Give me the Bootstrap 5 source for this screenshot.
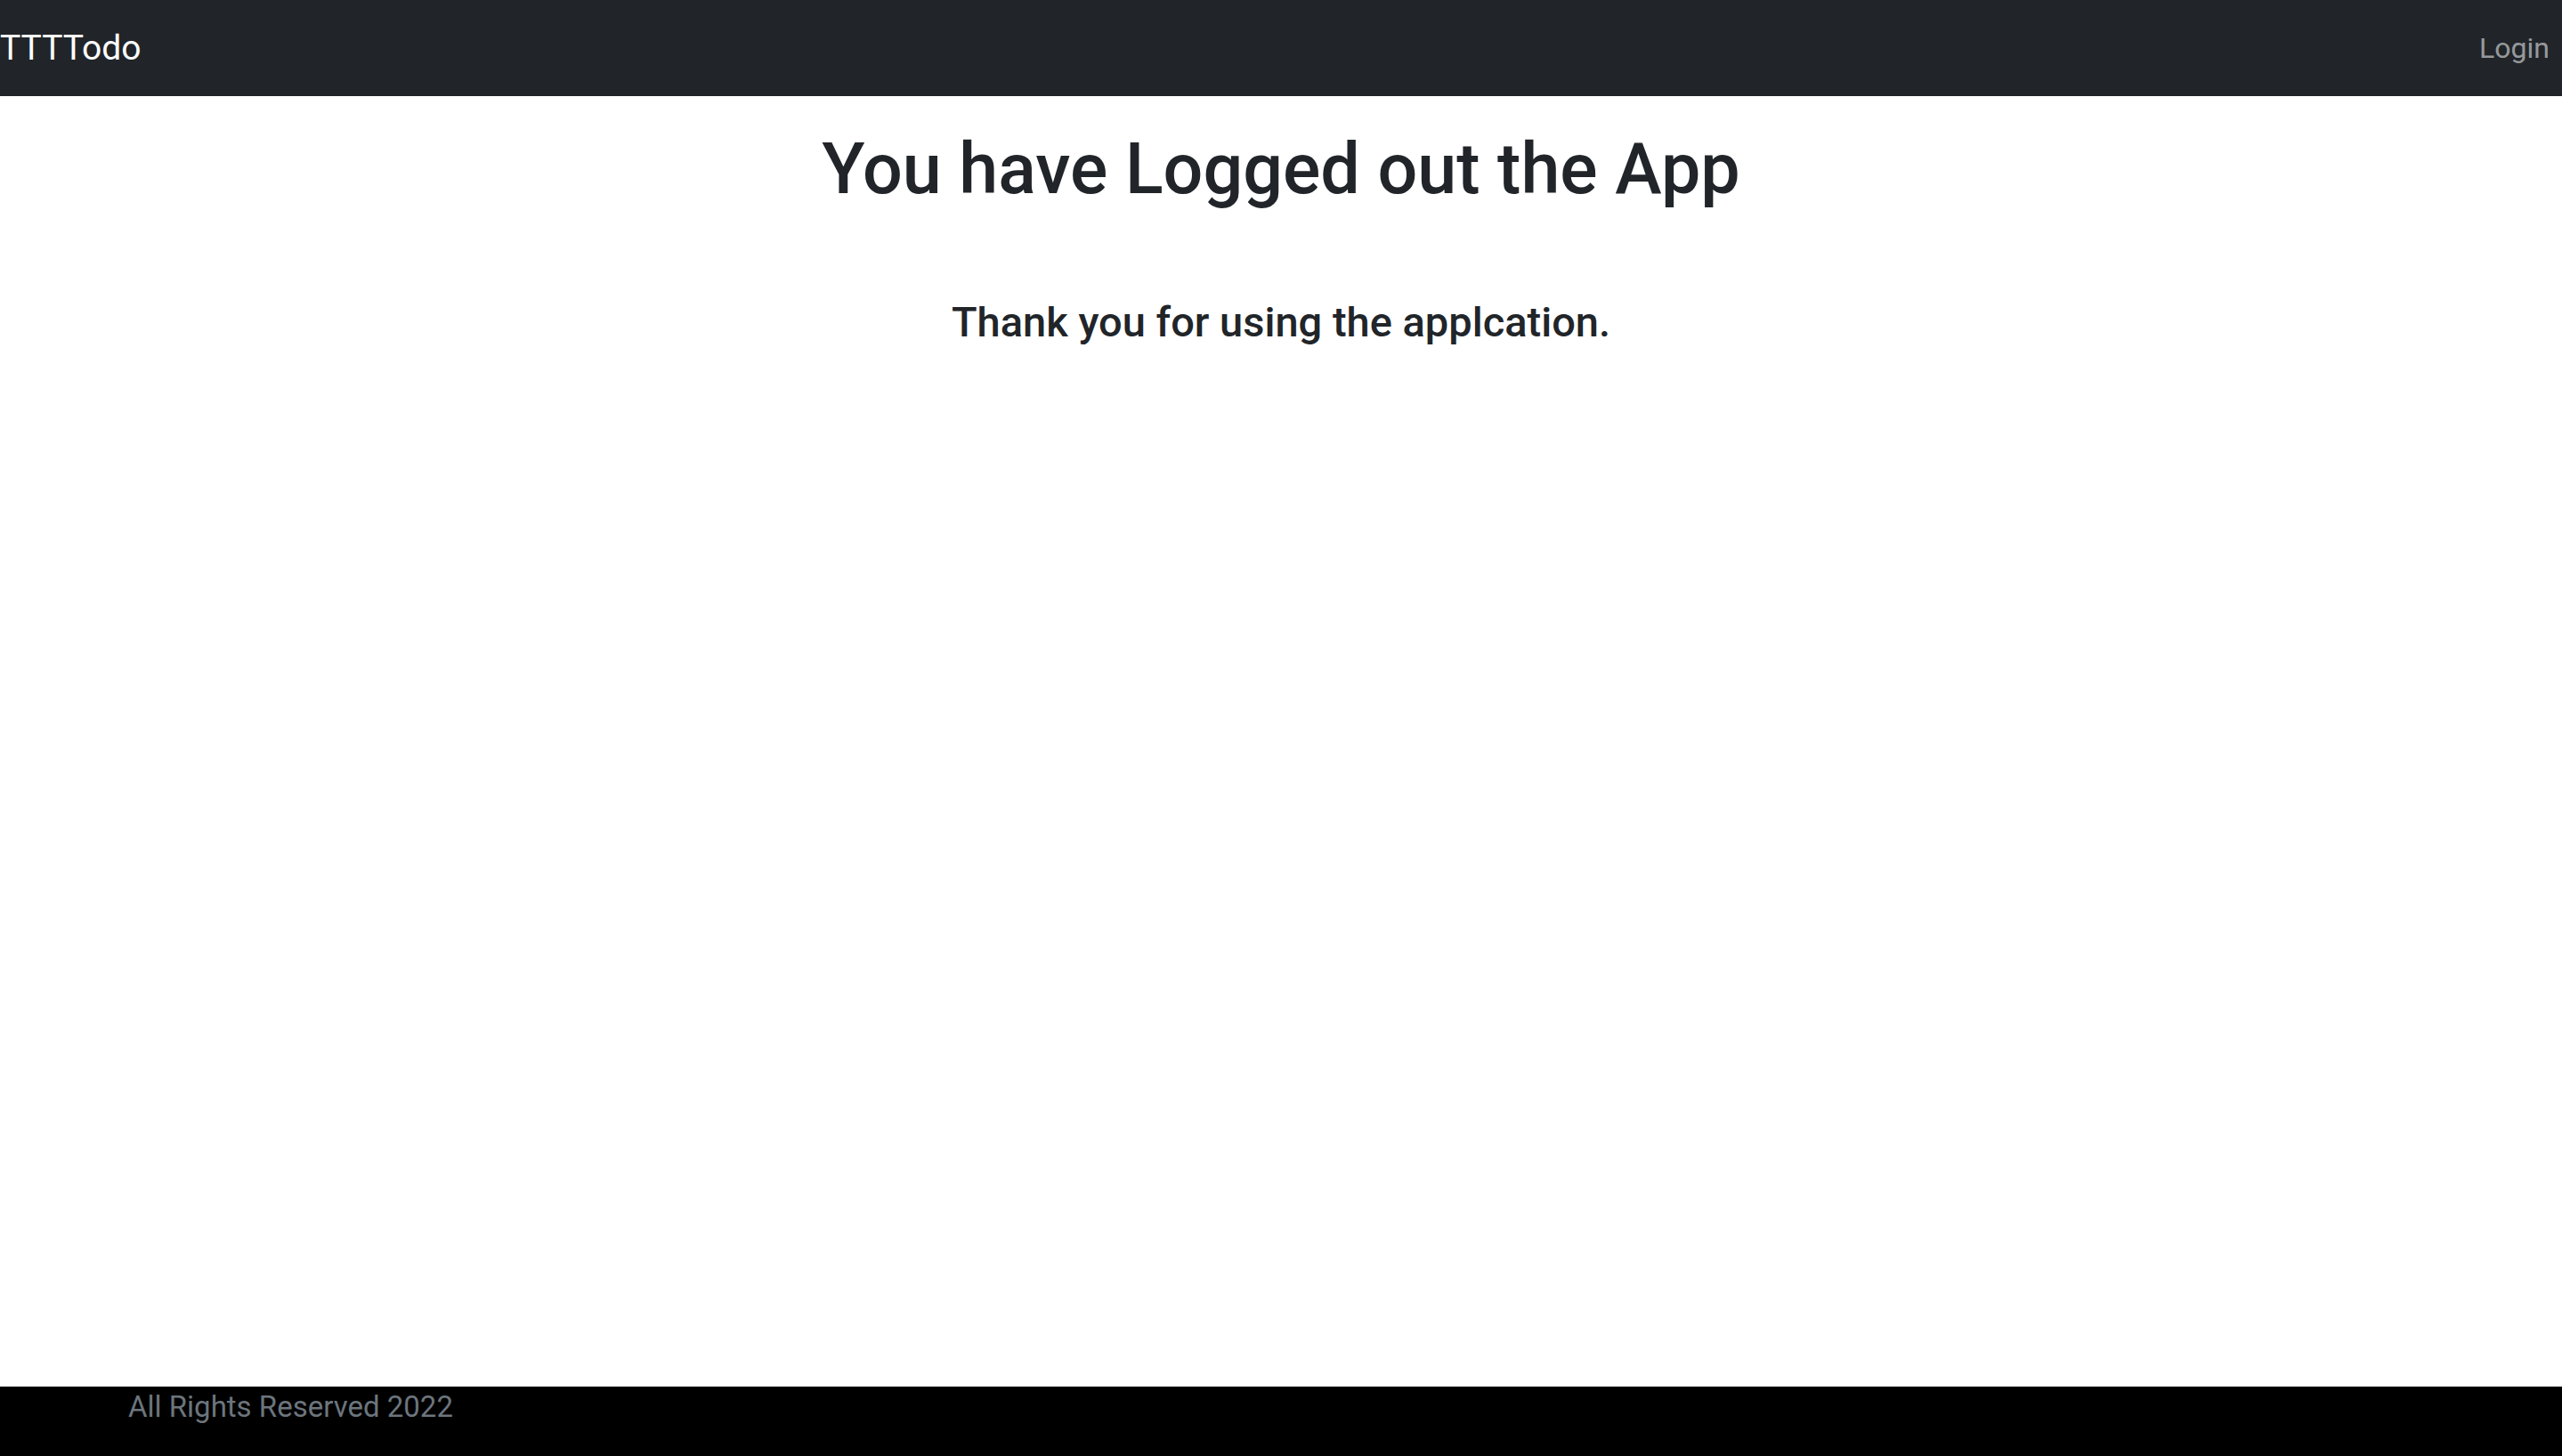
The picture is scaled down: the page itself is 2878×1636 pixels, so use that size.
<!DOCTYPE html>
<html lang="en">
<head>
<meta charset="utf-8">
<meta name="viewport" content="width=device-width, initial-scale=1">
<title>TTTTodo</title>
<link href="https://cdn.jsdelivr.net/npm/bootstrap@5.3.0/dist/css/bootstrap.min.css" rel="stylesheet">
<style>
body { font-family: Roboto, "Liberation Sans", sans-serif; font-size: 32px; line-height: 48px; }
.site-header { background: #212529; padding: 16px 0; }
.site-header .navbar-brand { font-size: 39px; line-height: 60px; padding: 8px 0; margin: 0; }
.site-header .navbar-nav .nav-link { font-size: 32px; line-height: 46px; padding: 8px 14px; }
.page-title { font-size: 79px; line-height: 96px; font-weight: 500; margin: 34px 0 96px; }
.page-note { font-size: 47px; line-height: 56px; font-weight: 500; }
.site-footer { background: #000; height: 78px; padding: 0 144px; font-size: 33px; line-height: 46px; }
</style>
</head>
<body class="d-flex flex-column min-vh-100">
<header>
<nav class="navbar navbar-expand navbar-dark site-header" aria-label="Main">
<a class="navbar-brand" href="#">TTTTodo</a>
<ul class="navbar-nav ms-auto"><li class="nav-item"><a class="nav-link" href="#">Login</a></li></ul>
</nav>
</header>
<main class="flex-grow-1 text-center">
<h1 class="page-title">You have Logged out the App</h1>
<h4 class="page-note">Thank you for using the applcation.</h4>
</main>
<footer class="site-footer"><span class="text-secondary">All Rights Reserved 2022</span></footer>
<script src="https://cdn.jsdelivr.net/npm/bootstrap@5.3.0/dist/js/bootstrap.bundle.min.js"></script>
</body>
</html>
